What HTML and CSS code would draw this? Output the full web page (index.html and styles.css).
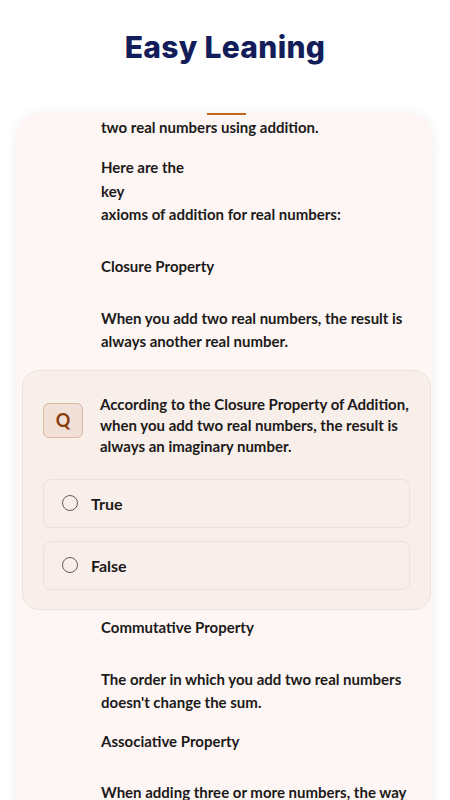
FILE: index.html
```html
<!DOCTYPE html>
<html lang="en">
<head>
<meta charset="utf-8">
<title>Easy Leaning</title>
<link rel="stylesheet" href="styles.css">
</head>
<body>
<header class="top">
  <h1 class="title">Easy Leaning</h1>
</header>
<main class="card">
  <div class="bar"></div>
  <div class="content">
    <p class="line">two real numbers using addition.</p>
    <p class="line gap">Here are the</p>
    <p class="line">key</p>
    <p class="line">axioms of addition for real numbers:</p>
    <p class="line head">Closure Property</p>
    <p class="line head">When you add two real numbers, the result is always another real number.</p>
  </div>
  <section class="quiz">
    <div class="question">
      <div class="badge">Q</div>
      <p class="qtext">According to the Closure Property of Addition, when you add two real numbers, the result is always an imaginary number.</p>
    </div>
    <div class="options">
      <label class="option"><span class="radio"></span><span class="opt-label">True</span></label>
      <label class="option"><span class="radio"></span><span class="opt-label">False</span></label>
    </div>
  </section>
  <div class="content after">
    <p class="line">Commutative Property</p>
    <p class="line head">The order in which you add two real numbers doesn't change the sum.</p>
    <p class="line gap-sm">Associative Property</p>
    <p class="line head">When adding three or more numbers, the way</p>
  </div>
</main>
</body>
</html>
```
FILE: styles.css
```css
html, body {
  margin: 0;
  padding: 0;
  background: #ffffff;
  overflow: hidden;
}
body {
  width: 450px;
  height: 800px;
  font-family: "Lato", "Noto Sans", sans-serif;
  color: #1c1a19;
}
.top {
  height: 94px;
  display: flex;
  align-items: center;
  justify-content: center;
}
.title {
  margin: 0;
  font-family: "Inter", "Open Sans", sans-serif;
  font-weight: 800;
  font-size: 30px;
  color: #121d5a;
  letter-spacing: 0.3px;
}
.card {
  margin: 19px 17px 0 16px;
  height: 700px;
  background: #fdf6f4;
  border-radius: 26px 26px 0 0;
  box-shadow: 0 0 12px rgba(0, 0, 0, 0.07);
  display: flex;
  flex-direction: column;
}
.bar {
  width: 39px;
  height: 2px;
  background: #c2671b;
  margin: 0 0 0 191px;
  flex: none;
}
.content {
  padding: 1px 12px 0 85px;
}
.line {
  margin: 0;
  font-size: 15px;
  font-weight: 700;
  line-height: 23.4px;
}
.line.gap {
  margin-top: 17px;
}
.line.gap-sm {
  margin-top: 15px;
}
.line.head {
  margin-top: 28.5px;
}
.quiz {
  margin: 16px 2px 0 6px;
  background: #f8eeea;
  border: 1px solid #efe1db;
  border-radius: 17px;
  padding: 23px 20px 19px 20px;
}
.question {
  display: flex;
  align-items: flex-start;
  gap: 17px;
}
.badge {
  flex: none;
  width: 38px;
  height: 33px;
  margin-top: 9px;
  background: #f0e0d7;
  border: 1px solid #d9b9a4;
  border-radius: 6px;
  display: flex;
  align-items: center;
  justify-content: center;
  color: #8a3c0b;
  font-weight: 700;
  font-size: 18px;
}
.qtext {
  margin: 0;
  font-size: 15px;
  font-weight: 700;
  line-height: 21px;
}
.options {
  margin-top: 22px;
  display: flex;
  flex-direction: column;
  gap: 13px;
}
.option {
  height: 47px;
  border: 1px solid #eee1dc;
  border-radius: 8px;
  background: #f8efeb;
  display: flex;
  align-items: center;
  padding-left: 18px;
}
.radio {
  width: 14px;
  height: 14px;
  border: 1.6px solid #6a5a52;
  border-radius: 50%;
  flex: none;
}
.opt-label {
  margin-left: 13px;
  font-size: 16px;
  font-weight: 700;
}
.after {
  padding-top: 6px;
}
```
